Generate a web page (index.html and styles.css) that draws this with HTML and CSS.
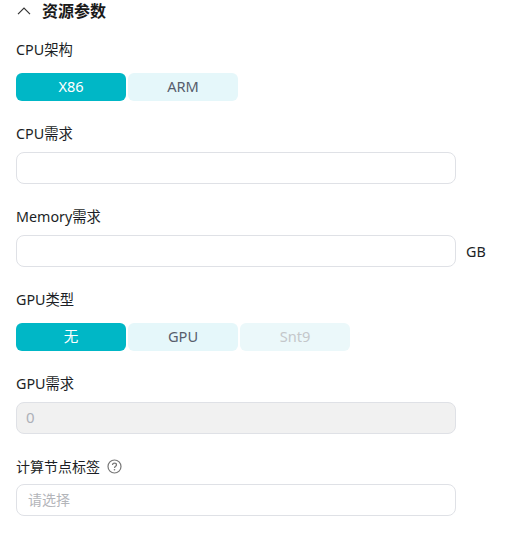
FILE: index.html

```html
<!DOCTYPE html>
<html lang="zh-CN">
    <head>
        <meta charset="UTF-8" />
        <title>资源参数</title>

        <link rel="stylesheet" href="styles.css">
    </head>
    <body>
        <div class="panel">
            <div class="section-head">
                <svg class="chevron" width="14" height="8" viewBox="0 0 14 8"><path d="M1 7.2L7 1.2 13 7.2" fill="none" stroke="#333" stroke-width="1.2"/></svg>
                <h2>资源参数</h2>
            </div>

            <div class="field field-first">
                <label>CPU架构</label>
                <div class="btn-group">
                    <span class="opt on">X86</span>
                    <span class="opt">ARM</span>
                </div>
            </div>

            <div class="field">
                <label>CPU需求</label>
                <div class="input-row"><div class="input"></div></div>
            </div>

            <div class="field">
                <label>Memory需求</label>
                <div class="input-row"><div class="input"></div><span class="unit">GB</span></div>
            </div>

            <div class="field">
                <label>GPU类型</label>
                <div class="btn-group">
                    <span class="opt on">无</span>
                    <span class="opt">GPU</span>
                    <span class="opt off">Snt9</span>
                </div>
            </div>

            <div class="field">
                <label>GPU需求</label>
                <div class="input-row"><div class="input disabled">0</div></div>
            </div>

            <div class="field field-last">
                <label>计算节点标签
                    <svg class="help" width="15" height="15" viewBox="0 0 15 15"><circle cx="7.5" cy="7.5" r="6.5" fill="none" stroke="#777" stroke-width="1.2"/><path d="M5.5 6C5.5 4.8 6.4 4.1 7.5 4.1S9.5 4.8 9.5 5.9C9.5 7.2 7.5 7.3 7.5 9" fill="none" stroke="#777" stroke-width="1.2"/><circle cx="7.5" cy="10.8" r=".8" fill="#777"/></svg>
                </label>
                <div class="input-row"><div class="input placeholder">请选择</div></div>
            </div>
        </div>
    </body>
</html>
```

FILE: styles.css

```css
body {
    margin: 0;
    background: #fff;
    font-family: "Noto Sans", "Noto Sans CJK SC", sans-serif;
    font-size: 14px;
    color: #1c1f26;
}

.panel {
    padding: 0 16px;
}

.section-head {
    display: flex;
    align-items: center;
    gap: 11px;
    height: 22px;
    padding-left: 1px;
}

h2 {
    margin: 0;
    font-size: 16px;
    font-weight: 700;
    line-height: 22px;
    color: #191919;
}

.field {
    margin-top: 22px;
}

.field-first {
    margin-top: 17px;
}

.field-last label {
    font-size: 14px;
}

.field-last .input-row {
    margin-top: 8px;
}

label {
    display: flex;
    align-items: center;
    gap: 7px;
    box-sizing: border-box;
    height: 20px;
    padding-top: 1px;
    line-height: 20px;
    font-size: 14.3px;
}

.btn-group {
    display: flex;
    gap: 2px;
    margin-top: 14px;
}

.opt {
    width: 110px;
    height: 28px;
    line-height: 27px;
    text-align: center;
    background: #e5f7fa;
    border-radius: 6px;
    color: #575d6c;
    font-size: 14.6px;
}

.opt.on {
    background: #00b7c6;
    color: #fff;
}

.opt.off {
    background: #ebf8fa;
    color: #c4c7ca;
}

.input-row {
    display: flex;
    align-items: center;
    gap: 10px;
    margin-top: 9px;
}

.input {
    box-sizing: border-box;
    width: 440px;
    height: 32px;
    line-height: 30px;
    padding: 0 11px 0 9px;
    border: 1px solid #dfe1e6;
    border-radius: 8px;
    background: #fff;
}

.input.disabled {
    background: #f1f1f1;
    color: #adb0b8;
    font-size: 15px;
    line-height: 29px;
}

.input.placeholder {
    padding-left: 11px;
    color: #b3b5ba;
}

.unit {
    font-size: 14.3px;
}
```
